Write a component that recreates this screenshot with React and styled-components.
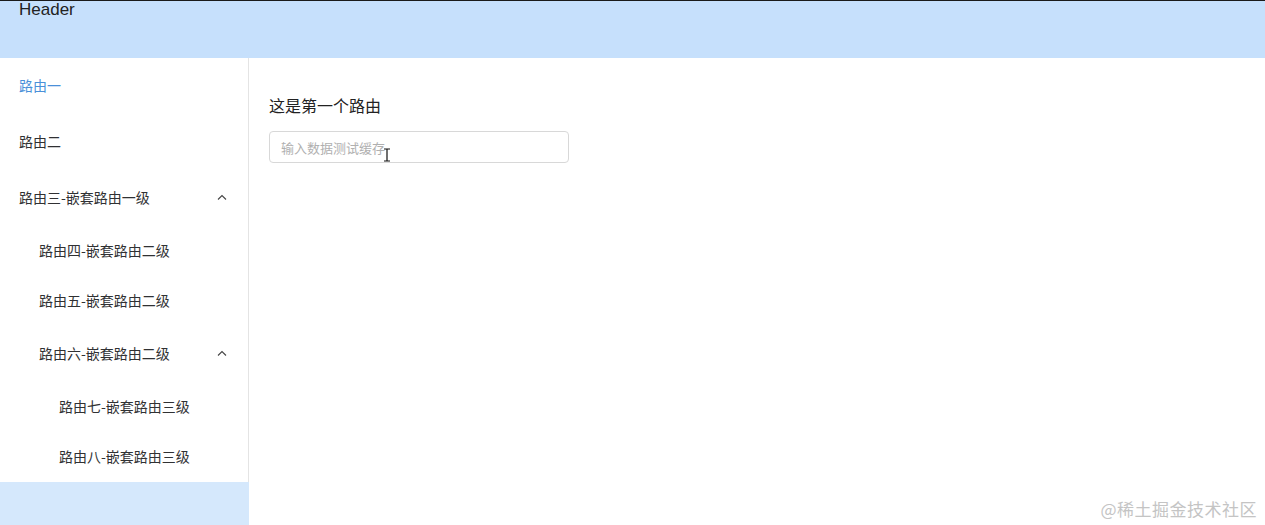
import React, { useState } from 'react';
import styled, { createGlobalStyle } from 'styled-components';

const GlobalStyle = createGlobalStyle`
    html, body {
        margin: 0;
        padding: 0;
        height: 100%;
        background: #fff;
    }
    #root {
        height: 100%;
    }
    * {
        box-sizing: border-box;
    }
`;

const Layout = styled.div`
    height: 525px;
    display: flex;
    flex-direction: column;
    font-family: "Liberation Sans", "Noto Sans CJK SC", sans-serif;
    position: relative;
`;

const Header = styled.header`
    height: 58px;
    flex-shrink: 0;
    background: #c6e0fc;
    border-top: 1px solid #1a1a1a;
    padding: 0 19px;
    font-size: 17px;
    line-height: 17px;
    color: #222;
`;

const Body = styled.div`
    flex: 1;
    display: flex;
    min-height: 0;
`;

const Aside = styled.aside`
    width: 249px;
    flex-shrink: 0;
    background: #d5e8fc;
`;

const Menu = styled.ul`
    list-style: none;
    margin: 0;
    padding: 0;
    background: #fff;
    border-right: 1px solid #e4e4e4;
`;

const Item = styled.li`
    height: ${p => (p.$nested ? 50 : 56)}px;
    display: flex;
    align-items: center;
    justify-content: space-between;
    padding-left: ${p => 19 + p.$level * 20}px;
    padding-right: 20px;
    padding-bottom: 2px;
    font-size: 14px;
    font-family: "Noto Sans CJK SC", sans-serif;
    color: ${p => (p.$active ? '#4a90d9' : '#303133')};
    cursor: pointer;
`;

const Arrow = styled.svg`
    width: 12px;
    height: 12px;
    margin-top: 1px;
`;

const Main = styled.main`
    flex: 1;
    padding: 36px 20px;
    display: flex;
    flex-direction: column;
    align-items: flex-start;
    gap: 15px;
`;

const Title = styled.div`
    font-size: 16px;
    font-family: "Noto Sans CJK SC", sans-serif;
    color: #222;
    line-height: 22px;
`;

const InputWrap = styled.div`
    position: relative;
`;

const Input = styled.input`
    width: 300px;
    height: 32px;
    border: 1px solid #d8d8d8;
    border-radius: 4px;
    padding: 0 11px;
    font-size: 13px;
    font-family: "Noto Sans CJK SC", sans-serif;
    color: #333;
    outline: none;
    &::placeholder {
        color: #b0b0b0;
    }
`;

const Cursor = styled.svg`
    position: absolute;
    left: 114px;
    top: 17px;
    width: 8px;
    height: 14px;
    pointer-events: none;
`;

const Watermark = styled.div`
    position: absolute;
    right: 8px;
    bottom: 4px;
    font-size: 17px;
    font-family: "Noto Sans CJK SC", sans-serif;
    color: #c4c4c4;
    letter-spacing: 0.5px;
`;

const UpArrow = () => (
    <Arrow viewBox="0 0 12 12" fill="none" stroke="#444" strokeWidth="1.1">
        <path d="M2 7.5 L6 3.5 L10 7.5" />
    </Arrow>
);

const menuData = [
    { label: '路由一', level: 0, active: true },
    { label: '路由二', level: 0 },
    { label: '路由三-嵌套路由一级', level: 0, open: true },
    { label: '路由四-嵌套路由二级', level: 1, nested: true },
    { label: '路由五-嵌套路由二级', level: 1, nested: true },
    { label: '路由六-嵌套路由二级', level: 1, open: true },
    { label: '路由七-嵌套路由三级', level: 2, nested: true },
    { label: '路由八-嵌套路由三级', level: 2, nested: true },
];

function App() {
    const [value, setValue] = useState('');

    return (
        <Layout>
            <GlobalStyle />
            <Header>Header</Header>
            <Body>
                <Aside>
                    <Menu>
                        {menuData.map(item => (
                            <Item
                                key={item.label}
                                $level={item.level}
                                $nested={item.nested}
                                $active={item.active}
                            >
                                <span>{item.label}</span>
                                {item.open && <UpArrow />}
                            </Item>
                        ))}
                    </Menu>
                </Aside>
                <Main>
                    <Title>这是第一个路由</Title>
                    <InputWrap>
                        <Input
                            value={value}
                            onChange={e => setValue(e.target.value)}
                            placeholder="输入数据测试缓存"
                        />
                        <Cursor viewBox="0 0 8 14" fill="none" stroke="#111" strokeWidth="1.2">
                            <path d="M1 1 H7 M4 1 V13 M1 13 H7" />
                        </Cursor>
                    </InputWrap>
                </Main>
            </Body>
            <Watermark>@稀土掘金技术社区</Watermark>
        </Layout>
    );
}

export default App;
